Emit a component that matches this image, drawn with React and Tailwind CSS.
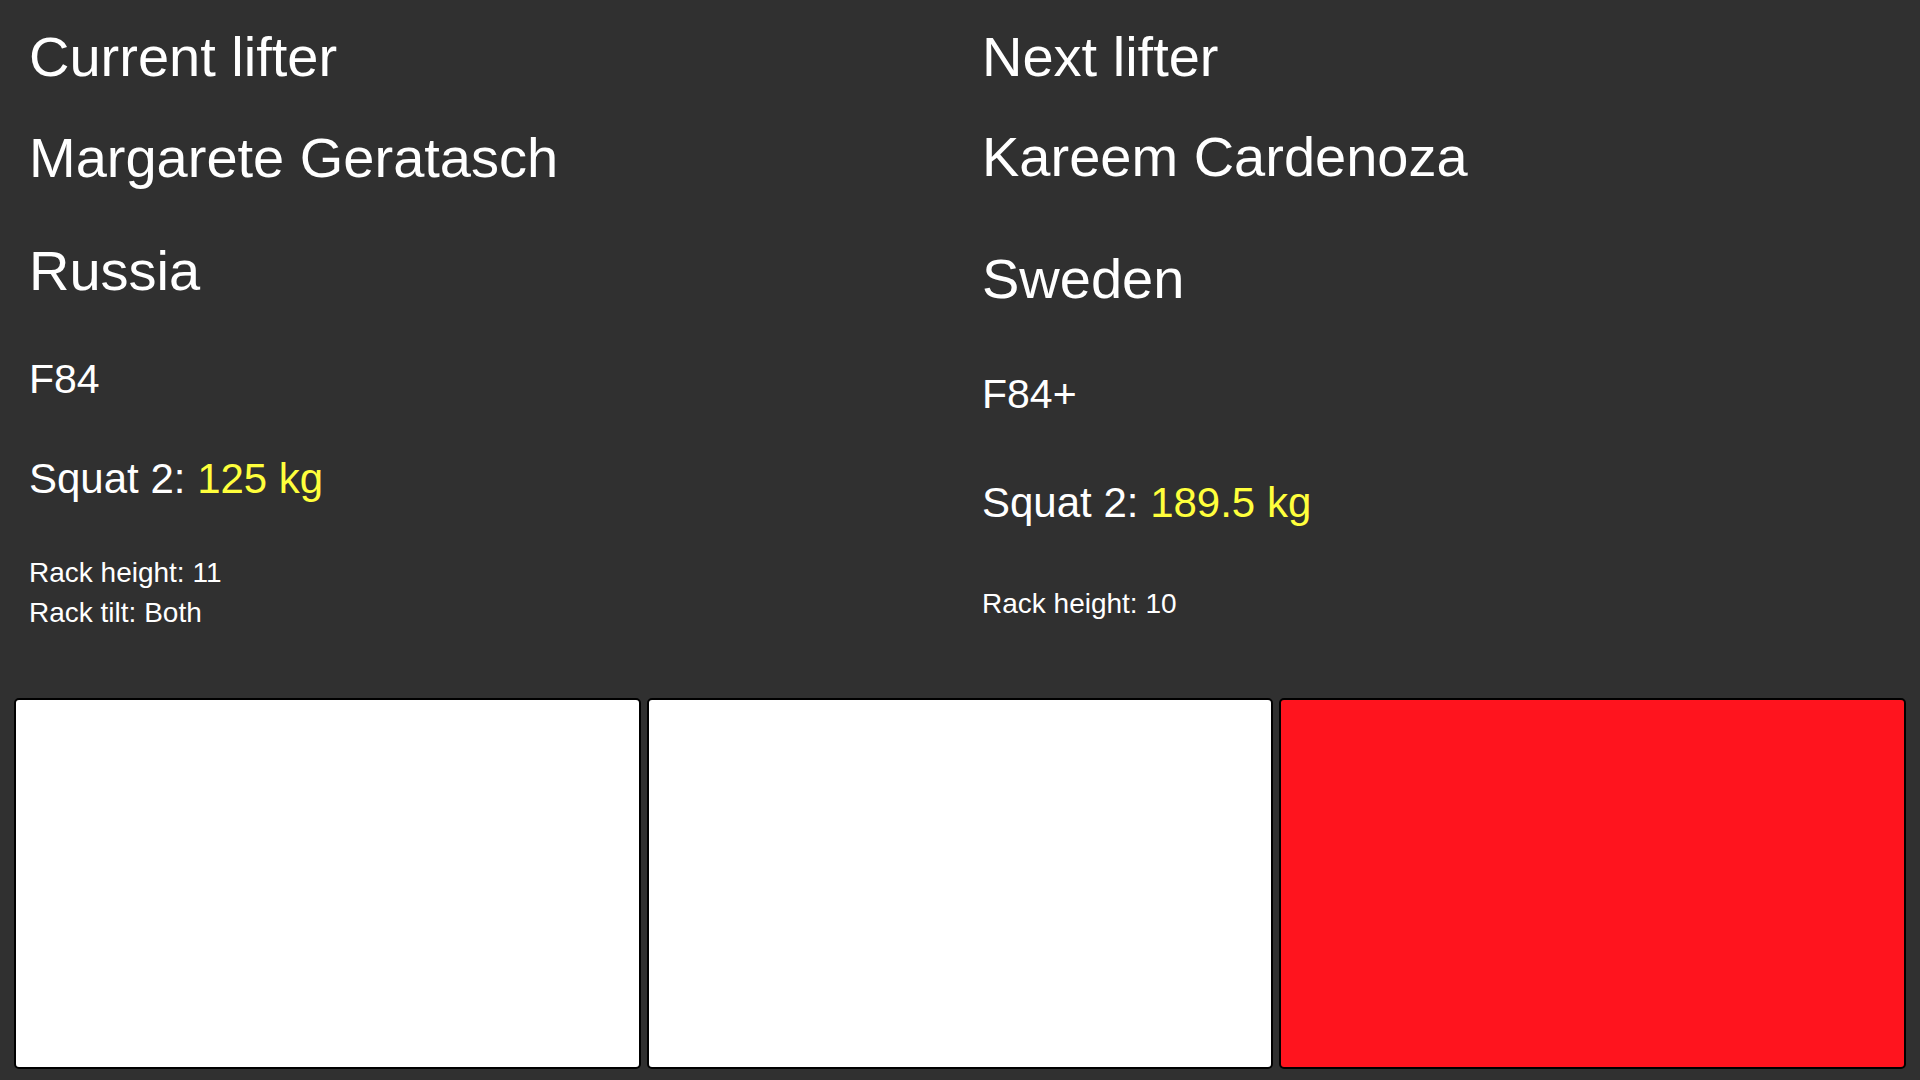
export default function App() {
  const font = { fontFamily: '"Liberation Sans", Arial, sans-serif' };
  return (
    <div
      className="w-[1920px] h-[1080px] bg-[#303030] text-white flex flex-col overflow-hidden"
      style={font}
    >
      <div className="flex-1 grid grid-cols-2 gap-[16px] px-[16px] pt-[25px]">
        <div className="flex flex-col pl-[13px]">
          <div className="text-[56px] leading-[64px]">Current lifter</div>
          <div className="text-[56px] leading-[64px] mt-[37px]">Margarete Geratasch</div>
          <div className="flex-1 flex flex-col justify-evenly">
            <div className="text-[56px] leading-[64px]">Russia</div>
            <div className="text-[41px] leading-[46px] pt-[3px]">F84</div>
            <div className="text-[42px] leading-[48px] pt-[4px]">
              Squat 2: <span className="text-[#ffff3c]">125 kg</span>
            </div>
            <div className="text-[28px] leading-[40px]">
              <div>Rack height: 11</div>
              <div>Rack tilt: Both</div>
            </div>
          </div>
        </div>
        <div className="flex flex-col pl-[14px]">
          <div className="text-[56px] leading-[64px]">Next lifter</div>
          <div className="text-[56px] leading-[64px] mt-[36px]">Kareem Cardenoza</div>
          <div className="flex-1 flex flex-col justify-evenly">
            <div className="text-[56px] leading-[64px]">Sweden</div>
            <div className="text-[41px] leading-[46px] pt-[3px]">F84+</div>
            <div className="text-[42px] leading-[48px] pt-[4px]">
              Squat 2: <span className="text-[#ffff3c]">189.5 kg</span>
            </div>
            <div className="text-[28px] leading-[40px]">
              <div>Rack height: 10</div>
            </div>
          </div>
        </div>
      </div>
      <div className="flex gap-[6px] px-[14px] pt-[16px] pb-[11px]">
        <div className="flex-1 h-[371px] bg-white border-2 border-black rounded-[5px]" />
        <div className="flex-1 h-[371px] bg-white border-2 border-black rounded-[5px]" />
        <div className="flex-1 h-[371px] bg-[#ff141e] border-2 border-black rounded-[5px]" />
      </div>
    </div>
  );
}
